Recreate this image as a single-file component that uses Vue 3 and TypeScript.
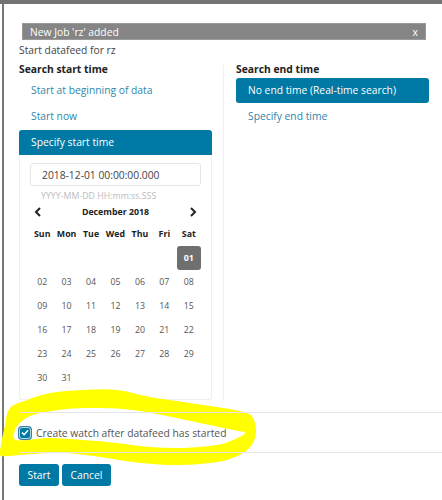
<template>
  <div class="page">
    <div class="top-bar"></div>
    <div class="modal">
      <div class="toast">
        <span>New Job 'rz' added</span>
        <span class="toast-close">x</span>
      </div>
      <div class="title">Start datafeed for rz</div>

      <div class="columns">
        <div class="col col-left">
          <h4>Search start time</h4>
          <a class="pill">Start at beginning of data</a>
          <a class="pill">Start now</a>
          <a class="pill active joined">Specify start time</a>
          <div class="picker">
            <input class="date-input" value="2018-12-01 00:00:00.000" />
            <div class="hint">YYYY-MM-DD HH:mm:ss.SSS</div>
            <div class="month-row">
              <svg width="8" height="10" viewBox="0 0 8 10"><path d="M6 1 L2 5 L6 9" fill="none" stroke="#222" stroke-width="2" /></svg>
              <span>December 2018</span>
              <svg width="8" height="10" viewBox="0 0 8 10"><path d="M2 1 L6 5 L2 9" fill="none" stroke="#222" stroke-width="2" /></svg>
            </div>
            <div class="cal">
              <div v-for="d in weekdays" :key="d" class="cell head">{{ d }}</div>
              <div
                v-for="(c, i) in cells"
                :key="i"
                class="cell"
                :class="{ selected: c === '01' }"
              >{{ c }}</div>
            </div>
          </div>
        </div>

        <div class="divider"></div>

        <div class="col col-right">
          <h4>Search end time</h4>
          <a class="pill active">No end time (Real-time search)</a>
          <a class="pill">Specify end time</a>
        </div>
      </div>

      <div class="watch-row">
        <span class="checkbox">
          <svg width="8" height="7" viewBox="0 0 9 8"><path d="M1 4 L3.5 6.5 L8 1.5" fill="none" stroke="#fff" stroke-width="1.8" /></svg>
        </span>
        <span>Create watch after datafeed has started</span>
      </div>

      <div class="footer">
        <button class="btn">Start</button>
        <button class="btn">Cancel</button>
      </div>
    </div>

    <!-- highlighter scribble on top of the screenshot -->
    <svg class="scribble" width="442" height="500" viewBox="0 0 442 500">
      <path fill="#ffff00" fill-rule="evenodd" :d="scribblePath" />
    </svg>
  </div>
</template>

<script setup lang="ts">
type Pt = [number, number]

const weekdays = ['Sun', 'Mon', 'Tue', 'Wed', 'Thu', 'Fri', 'Sat']

// December 2018 starts on a Saturday
const cells: string[] = ['', '', '', '', '', '']
for (let day = 1; day <= 31; day++) {
  cells.push(String(day).padStart(2, '0'))
}

const outer: Pt[] = [
  [0, 455], [1, 445], [5, 425], [10, 408], [27, 400], [50, 393], [83, 390], [117, 390],
  [150, 397], [183, 402], [217, 407], [247, 413], [255, 423], [255, 438], [247, 450],
  [227, 460], [200, 464], [167, 465], [133, 462], [100, 457], [67, 453], [33, 454], [7, 456]
]
const inner: Pt[] = [
  [14, 435], [18, 425], [33, 415], [67, 409], [100, 408], [133, 410], [167, 416], [200, 423],
  [233, 430], [245, 433], [233, 440], [217, 445], [183, 448], [150, 447], [117, 443],
  [83, 440], [50, 438], [27, 440], [16, 440]
]

// closed smooth curve through the points (catmull-rom to bezier)
const smooth = (pts: Pt[]) => {
  const at = (i: number) => pts[(i + pts.length) % pts.length]
  let d = `M${pts[0][0]} ${pts[0][1]}`
  pts.forEach((p, i) => {
    const [p0, p2, p3] = [at(i - 1), at(i + 1), at(i + 2)]
    const c1x = p[0] + (p2[0] - p0[0]) / 6
    const c1y = p[1] + (p2[1] - p0[1]) / 6
    const c2x = p2[0] - (p3[0] - p[0]) / 6
    const c2y = p2[1] - (p3[1] - p[1]) / 6
    d += ` C${c1x.toFixed(1)} ${c1y.toFixed(1)} ${c2x.toFixed(1)} ${c2y.toFixed(1)} ${p2[0]} ${p2[1]}`
  })
  return d + ' Z'
}

const scribblePath = `${smooth(outer)} ${smooth(inner)}`
</script>

<style>
html,
body {
  background: #fff;
}
</style>

<style scoped>
.page {
  position: relative;
  width: 442px;
  height: 500px;
  overflow: hidden;
  background: #fff;
  font-family: "Open Sans", sans-serif;
  font-size: 10.3px;
  color: #444;
}

.top-bar {
  height: 4px;
  background: #747474;
}

.modal {
  height: 496px;
  margin-left: 2px;
  border-left: 2px solid #777;
  padding: 19px 0 0 15px;
  box-sizing: border-box;
}

.toast {
  display: flex;
  justify-content: space-between;
  align-items: center;
  width: 404px;
  height: 17px;
  margin-left: 3px;
  padding: 0 7px;
  box-sizing: border-box;
  background: #858585;
  border: 1px solid #9a9a9a;
  color: #fff;
}

.title {
  height: 17px;
  line-height: 20px;
  color: #444;
}

.columns {
  display: flex;
  margin-top: 4px;
}

.col h4 {
  margin: 0;
  font-size: 10.3px;
  line-height: 17px;
  font-weight: 700;
  color: #222;
}

.col-left {
  width: 193px;
  height: 339px;
}

.divider {
  width: 1px;
  margin: 4px 12px 0 11px;
  background: #eef0f1;
}

.col-right {
  width: 193px;
}

.pill {
  display: block;
  height: 25px;
  line-height: 25px;
  padding-left: 12px;
  margin-bottom: 1px;
  color: #2f86a8;
  border-radius: 3px;
}

.pill.active {
  background: #0079a5;
  color: #fff;
}

.pill.joined {
  margin-bottom: 0;
  border-radius: 3px 3px 0 0;
}

.picker {
  height: 245px;
  padding: 8px 10px 0;
  box-sizing: border-box;
  border: 1px solid #eef0f1;
  border-top: none;
  border-radius: 0 0 3px 3px;
}

.date-input {
  display: block;
  width: 171px;
  height: 23px;
  padding: 0 11px;
  box-sizing: border-box;
  border: 1px solid #e4e7e9;
  border-radius: 3px;
  font-family: inherit;
  font-size: 10.3px;
  color: #444;
  outline: none;
}

.hint {
  margin-top: 3px;
  padding-left: 11px;
  font-size: 8.8px;
  line-height: 14px;
  color: #bbb;
}

.month-row {
  display: flex;
  justify-content: space-between;
  align-items: center;
  height: 16px;
  margin-top: 1px;
  padding: 0 4px;
  font-size: 8.8px;
  font-weight: 700;
  color: #222;
}

.cal {
  display: grid;
  grid-template-columns: repeat(7, 1fr);
  grid-auto-rows: 24px;
  margin-top: 2px;
}

.cell {
  display: flex;
  align-items: center;
  justify-content: center;
  font-size: 8.8px;
  color: #555;
  border-radius: 3px;
}

.cell.head {
  font-weight: 700;
  color: #222;
}

.cell.selected {
  background: #6f6f6f;
  color: #fff;
  font-weight: 700;
}

.watch-row {
  display: flex;
  align-items: center;
  gap: 5px;
  height: 41px;
  margin-top: 12px;
  box-sizing: border-box;
  border-top: 1px solid #e4e7e9;
  border-bottom: 1px solid #e4e7e9;
  color: #555;
  position: relative;
  z-index: 2;
}

.checkbox {
  display: flex;
  align-items: center;
  justify-content: center;
  width: 12px;
  height: 12px;
  box-sizing: border-box;
  background: #0079a5;
  border: 1px solid #b7d9e5;
  border-radius: 3px;
  box-shadow: 0 0 0 1px #35809f;
}

.footer {
  display: flex;
  gap: 3px;
  margin-top: 11px;
}

.btn {
  height: 22px;
  padding: 0 8.5px;
  background: #0079a5;
  border: none;
  border-radius: 3px;
  color: #fff;
  font-family: inherit;
  font-size: 10.3px;
}

.scribble {
  position: absolute;
  left: 0;
  top: 0;
  z-index: 1;
  pointer-events: none;
}
</style>
